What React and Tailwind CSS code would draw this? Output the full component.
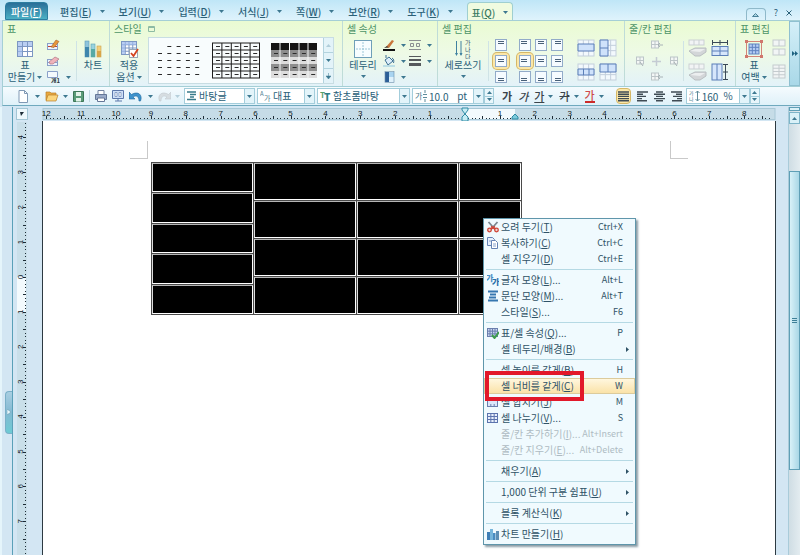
/**
 * App.jsx — Word processor window with the table tab and the cell context menu open.
 */

import { useState } from "react";

const MENUS = [
  ["편집", "E"],
  ["보기", "U"],
  ["입력", "D"],
  ["서식", "J"],
  ["쪽", "W"],
  ["보안", "R"],
  ["도구", "K"],
];

const CONTEXT_MENU = [
  [
    { label: "오려 두기", mnemonic: "T", hint: "Ctrl+X", icon: "cut" },
    { label: "복사하기", mnemonic: "C", hint: "Ctrl+C", icon: "copy" },
    { label: "셀 지우기", mnemonic: "D", hint: "Ctrl+E" },
  ],
  [
    { label: "글자 모양", mnemonic: "L", tail: "...", hint: "Alt+L", icon: "char" },
    { label: "문단 모양", mnemonic: "M", tail: "...", hint: "Alt+T", icon: "para" },
    { label: "스타일", mnemonic: "S", tail: "...", hint: "F6" },
  ],
  [
    { label: "표/셀 속성", mnemonic: "Q", tail: "...", hint: "P", icon: "props" },
    { label: "셀 테두리/배경", mnemonic: "B", sub: true },
  ],
  [
    { label: "셀 높이를 같게", mnemonic: "B", hint: "H" },
    { label: "셀 너비를 같게", mnemonic: "C", hint: "W", active: true },
    { label: "셀 합치기", mnemonic: "J", hint: "M", icon: "merge" },
    { label: "셀 나누기", mnemonic: "V", tail: "...", hint: "S", icon: "split" },
    { label: "줄/칸 추가하기", mnemonic: "I", tail: "...", hint: "Alt+Insert", disabled: true },
    { label: "줄/칸 지우기", mnemonic: "E", tail: "...", hint: "Alt+Delete", disabled: true },
  ],
  [{ label: "채우기", mnemonic: "A", sub: true }],
  [{ label: "1,000 단위 구분 쉼표", mnemonic: "U", sub: true }],
  [{ label: "블록 계산식", mnemonic: "K", sub: true }],
  [{ label: "차트 만들기", mnemonic: "H", icon: "chart" }],
];

function Svg({ w, h, children, className = "" }) {
  return (
    <svg width={w} height={h} viewBox={`0 0 ${w} ${h}`} fill="none" className={`shrink-0 ${className}`} aria-hidden="true">
      {children}
    </svg>
  );
}

function Caret({ className = "" }) {
  return (
    <Svg w={5} h={3} className={className}>
      <path d="M0 0h5L2.5 3z" fill="#3d7890" />
    </Svg>
  );
}

function Mnemonic({ label, k, tail }) {
  return <>{label}(<u className="underline-offset-1">{k}</u>){tail}</>;
}

/* Table glyph, used by many ribbon and menu icons */
function Grid({ x = 0, y = 0, w, h, cols, rows, fill = "#fff", stroke = "#7d97c2" }) {
  const lines = [];
  for (let i = 1; i < cols; i++) lines.push(`M${x + (w * i) / cols} ${y}v${h}`);
  for (let i = 1; i < rows; i++) lines.push(`M${x} ${y + (h * i) / rows}h${w}`);
  return (
    <g stroke={stroke}>
      <rect x={x} y={y} width={w} height={h} fill={fill} />
      <path d={lines.join("")} />
    </g>
  );
}

function TableIcon() {
  return (
    <Svg w={18} h={18}>
      <Grid x={1.5} y={1.5} w={15} h={15} cols={3} rows={3} />
      <path d="M2 2h14v4H2zM2 6h4v10H2z" fill="#9db9ec" fillOpacity=".7" />
      <path d="M1.5 6.5h15M6.5 1.5v15M11.5 1.5v5" stroke="#7d97c2" />
    </Svg>
  );
}

function ChartIcon() {
  return (
    <Svg w={18} h={18}>
      <rect x="1" y="1" width="4" height="16" fill="#8fc4dc" stroke="#5f9cb9" strokeWidth=".6" />
      <path d="M1 7h4v10H1z" fill="#3f86ad" />
      <rect x="7" y="4" width="4" height="13" fill="#9ad3de" stroke="#5aa3b4" strokeWidth=".6" />
      <path d="M7 9h4v8H7z" fill="#56a9a4" />
      <rect x="13" y="6" width="4" height="11" fill="#f3d07c" stroke="#c9a24f" strokeWidth=".6" />
      <path d="M13 11h4v6h-4z" fill="#d9a548" />
    </Svg>
  );
}

function ApplyIcon() {
  return (
    <Svg w={19} h={19}>
      <Grid x={1.5} y={1.5} w={15} h={13} cols={4} rows={4} />
      <path d="M2 2h14v3H2zM2 5h3v9H2z" fill="#9db9ec" fillOpacity=".7" />
      <rect x="9.500" y="9.500" width="8" height="8" fill="#fff" stroke="#9aa7b5" />
      <path d="M11 13l2.500 3L18 9" stroke="#d4431f" strokeWidth="1.800" />
    </Svg>
  );
}

function BorderIcon() {
  return (
    <Svg w={18} h={18}>
      <rect x=".5" y=".5" width="17" height="17" fill="#f7fdff" stroke="#6f9fb8" />
      <path d="M9 2v14M2 9h14" stroke="#9cc7d8" strokeDasharray="2 1" />
    </Svg>
  );
}

function VerticalTextIcon() {
  return (
    <Svg w={17} h={20}>
      <path d="M1.500 2v14M6 2v14" stroke="#3f81a0" />
      <path d="M0 14l1.500 3L3 14zM4.500 14L6 17l1.500-3z" fill="#3f81a0" />
      <g fontSize="6" fill="#31536a">
        <text x="10" y="6">가</text>
        <text x="10" y="13">나</text>
        <text x="10" y="20">다</text>
      </g>
    </Svg>
  );
}

function MarginIcon() {
  return (
    <Svg w={18} h={18}>
      <Grid x={4} y={4} w={10} h={10} cols={3} rows={3} fill="#b5cdf3" stroke="#5f83c0" />
      <path d="M1.500 0v18M16.500 0v18M0 1.500h18M0 16.500h18" stroke="#d0776c" strokeWidth=".9" />
      <path d="M0 0h3v3H0zM15 0h3v3h-3zM0 15h3v3H0zM15 15h3v3h-3z" fill="#d0776c" />
    </Svg>
  );
}

/* row and col say against which edges of the cell the text bars sit */
function AlignCellIcon({ row, col }) {
  const y = [2.5, 4.5, 7.5][row];
  const x = [2, 3, 4][col];
  return (
    <Svg w={12} h={12}>
      <rect x=".5" y=".5" width="11" height="11" fill="#f6fbff" stroke="#92abc9" />
      <path d={`M${x} ${y}h6M${x} ${y + 2}h6`} stroke="#496179" />
    </Svg>
  );
}

function SplitCellIcon({ kind }) {
  const fills = {
    mergeRow: "M1 5h16v7H1z",
    mergeCol: "M1 1h8v16H1z",
    splitRow: "M1 6h16v6H1z",
    splitTop: "M1 1h16v8H1z",
  };
  const lines = {
    mergeRow: "M1 5h16v7H1z",
    mergeCol: "M1 1h8v16H1zM1 9h8",
    splitRow: "M1 6h16v6H1zM6.500 6v6M12 6v6",
    splitTop: "M1 1h16v8H1zM9 1v8",
  };
  return (
    <Svg w={18} h={18}>
      <Grid x={1} y={1} w={16} h={16} cols={3} rows={3} fill="#f3f9fd" stroke="#c3cfdc" />
      <path d={fills[kind]} fill="#cfe2fb" />
      <path d={lines[kind]} stroke="#5b7fb8" />
    </Svg>
  );
}

function EraseLineIcon() {
  return (
    <Svg w={19} h={18}>
      <Grid x={1} y={1} w={15} h={5} cols={3} rows={1} fill="#f2f4f5" stroke="#cbd1d4" />
      <path d="M1 12l6-3 11 0v4l-6 4H7z" fill="#d3d6d8" stroke="#b9bec1" />
      <path d="M2 12l5-2h10l-5 3z" fill="#eceeef" />
    </Svg>
  );
}

function EqualHeightIcon() {
  return (
    <Svg w={18} h={17}>
      <Grid x={1} y={6.5} w={16} h={9} cols={2} rows={2} fill="#d6e6fb" stroke="#5b7fb8" />
      <path d="M1 2.500h16M1.500 0v5M9 0v5M16.500 0v5" stroke="#3a4a57" />
    </Svg>
  );
}

function EqualWidthIcon() {
  return (
    <Svg w={18} h={18}>
      <Grid x={1} y={1} w={10} h={16} cols={2} rows={1} fill="#d6e6fb" stroke="#5b7fb8" />
      <path d="M14.500 1v16M12 1.500h5M12 9h5M12 16.500h5" stroke="#3a4a57" />
    </Svg>
  );
}

function InsertIcon({ flip }) {
  return (
    <Svg w={12} h={10}>
      <Grid x={flip ? 2.5 : 0.5} y={1} w={7} h={7} cols={2} rows={2} fill="#f4f7f6" stroke="#bcc5c8" />
      <path d={flip ? "M6 6l3 4" : "M8 5h4M9 3L7 5l2 2"} stroke="#a8b2b6" />
    </Svg>
  );
}

function PencilIcon() {
  return (
    <Svg w={13} h={12}>
      <Grid x={0.5} y={4.5} w={10} h={6} cols={1} rows={2} fill="#eef4fd" stroke="#8aa0c9" />
      <path d="M1 7.500h9" stroke="#c4412f" />
      <path d="M4 8l5-7 3 1.500-5 6z" fill="#e8973b" stroke="#a3602a" strokeWidth=".6" />
    </Svg>
  );
}

function EraserIcon() {
  return (
    <Svg w={13} h={12}>
      <Grid x={0.5} y={4.5} w={10} h={6} cols={1} rows={2} fill="#eef4fd" stroke="#8aa0c9" />
      <path d="M2 7l6-5 4 2-6 5H3z" fill="#efb3bb" stroke="#b27583" strokeWidth=".7" />
    </Svg>
  );
}

function CaptionIcon() {
  return (
    <Svg w={13} h={12}>
      <path d="M.5.5h10v6H.5z" fill="#f4fafd" stroke="#8aa0c9" />
      <text x="4" y="12" fontSize="6" fontWeight="700" fill="#2c3840">개1</text>
    </Svg>
  );
}

function LineColorIcon() {
  return (
    <Svg w={12} h={12}>
      <path d="M0 10h12v2H0z" fill="#111" />
      <path d="M3 8l6-7 2 1-5 7z" fill="#c9763b" />
      <path d="M1 9l3-2 1.500 1.500z" fill="#3a3330" />
    </Svg>
  );
}

function FillColorIcon() {
  return (
    <Svg w={12} h={12}>
      <path d="M2 5l4-3 4 4-5 4z" fill="#dceefa" stroke="#3c6f93" />
      <path d="M3 3V0M9 3c2 1 2 3 1.500 5" stroke="#3c6f93" />
      <path d="M0 10.500h12v1H0z" fill="#8ec6de" />
    </Svg>
  );
}

function GradientIcon() {
  return (
    <Svg w={12} h={12}>
      <rect x="2" y="1" width="9" height="10" fill="#a9d4f0" />
      <rect x="2" y="1" width="4" height="10" fill="#2d5f97" />
      <path d="M6 6h5v5H6z" fill="#dff1fb" />
      <rect x="2" y=".5" width="9" height="11" stroke="#6a8cab" strokeWidth=".6" />
    </Svg>
  );
}

function LineStyleIcon() {
  return (
    <Svg w={12} h={10}>
      <path d="M0 .5h12M0 9.500h12" stroke="#8b8f92" />
      <path d="M1.500 3.500h3v3h-3zM7.500 3.500h3v3h-3z" stroke="#8b8f92" />
    </Svg>
  );
}

function LineWeightIcon() {
  return (
    <Svg w={12} h={10}>
      <path d="M0 .5h12" stroke="#55595c" />
      <path d="M0 4h12" stroke="#55595c" strokeWidth="2" />
      <path d="M0 8.500h12" stroke="#55595c" strokeWidth="3" />
    </Svg>
  );
}

/* Style thumbnails in the gallery */
function StyleThumb({ kind }) {
  const rows = [0, 1, 2, 3, 4];
  const bands = ["#141414", "#8d8d8d", "#dcdcdc", "#8d8d8d", "#dcdcdc"];
  return (
    <Svg w={48} h={38}>
      {kind === "dark" && rows.map((r) => <path key={r} d={`M1 ${1 + r * 7}h46v7H1z`} fill={bands[r]} />)}
      {kind === "dark" && <path d="M10 0v37M19.500 0v37M29 0v37M38 0v37" stroke="#f4f6f6" />}
      {rows.map((r) =>
        rows.map((c) =>
          (kind === "plain" && r === 0 && c === 0) || (kind === "dark" && r === 0) ? null : (
            <path key={`${r}-${c}`} d={`M${4 + c * 9.3} ${4.5 + r * 7}h4`} stroke="#2b2b2b" />
          )
        )
      )}
      {kind === "grid" && <Grid x={0.5} y={1} w={47} h={35} cols={5} rows={5} fill="none" stroke="#1d1d1d" />}
    </Svg>
  );
}

function MenuIcon({ name }) {
  if (name === "cut")
    return (
      <Svg w={12} h={12}>
        <path d="M1.500 1l8 9M10.500 1l-8 9" stroke="#7c8790" strokeWidth="1.800" />
        <circle cx="2.500" cy="9" r="1.800" fill="#f4d3cf" stroke="#cf4536" strokeWidth="1.300" />
        <circle cx="9.500" cy="9" r="1.800" fill="#f4d3cf" stroke="#cf4536" strokeWidth="1.300" />
        <path d="M4 5.500l4 2.500M8 5.500L4 8" stroke="#cf4536" strokeWidth="1.500" />
      </Svg>
    );
  if (name === "copy")
    return (
      <Svg w={12} h={12}>
        <path d="M.5.5h5l2 2v6h-7z" fill="#e6f0fc" stroke="#6482b4" />
        <path d="M4.500 3.500h4l2 2v6h-6z" fill="#fff" stroke="#6482b4" />
        <path d="M6 7h3M6 9h3M2 4h2" stroke="#88a2cc" />
      </Svg>
    );
  if (name === "char")
    return (
      <Svg w={12} h={12}>
        <text x="-1" y="7" fontSize="8" fontWeight="900" fill="#4a8fc4">가</text>
        <text x="5" y="11" fontSize="8" fontWeight="900" fill="#2b6ea8">가</text>
      </Svg>
    );
  if (name === "para")
    return (
      <Svg w={12} h={12}>
        <path d="M1 1.500h10M3 4.500h6M2 7.500h7M1 10.500h10" stroke="#3677b0" strokeWidth="1.800" />
      </Svg>
    );
  if (name === "props")
    return (
      <Svg w={12} h={12}>
        <Grid x={0.5} y={1.5} w={10} h={8} cols={4} rows={3} fill="#c9d6f0" stroke="#6b7fae" />
        <path d="M5 8l2.500 3L12 5" stroke="#3e9c4c" strokeWidth="2" />
      </Svg>
    );
  if (name === "merge")
    return (
      <Svg w={12} h={12}>
        <Grid x={0.5} y={1.5} w={10} h={9} cols={3} rows={3} fill="#dbe7fa" stroke="#6b7fae" />
        <path d="M1 5h9v3H1z" fill="#dbe7fa" />
      </Svg>
    );
  if (name === "split")
    return (
      <Svg w={12} h={12}>
        <Grid x={0.5} y={1.5} w={10} h={9} cols={3} rows={3} fill="#e9f0fc" stroke="#5c74ae" />
      </Svg>
    );
  if (name === "chart")
    return (
      <Svg w={12} h={12}>
        <path d="M0 4h3v8H0z" fill="#3d7db5" />
        <path d="M3 1h3v11H3z" fill="#76b6dc" />
        <path d="M6 5h2.500v7H6z" fill="#4a8cc0" />
        <path d="M9 3h3v9H9z" fill="#5d8fb5" />
      </Svg>
    );
  return <span className="w-3 shrink-0" />;
}

function Group({ title, extra, className = "", children }) {
  return (
    <section className={`flex shrink-0 flex-col border-r border-[#bfdcd8] ${className}`}>
      <h2 className="flex h-4 items-center gap-1.5 px-1 text-[10px] leading-4 text-[#4d9468]">
        {title}
        {extra}
      </h2>
      <div className="flex flex-1 items-start">{children}</div>
    </section>
  );
}

function BigButton({ icon, lines, caret, className = "" }) {
  return (
    <button type="button" className={`flex shrink-0 flex-col items-center pt-0.5 ${className}`}>
      <span className="flex h-5 items-center">{icon}</span>
      {lines.map((l, i) => (
        <span key={l} className="flex items-center gap-0.5 text-[10px] leading-3 whitespace-nowrap">
          {l}
          {caret === "inline" && i === lines.length - 1 && <Caret />}
        </span>
      ))}
      {caret === "below" && <Caret className="mt-1" />}
    </button>
  );
}

function SmallButton({ icon, label, caret }) {
  return (
    <button type="button" aria-label={label} className="flex h-4 items-center gap-1.5">
      {icon}
      {caret && <Caret />}
    </button>
  );
}

function Divider() {
  return <span className="mt-1 h-10 w-px shrink-0 bg-[#cfe3e6]" />;
}

function Ribbon() {
  return (
    <div className="ml-0.5 flex h-[66px] shrink-0 overflow-hidden border-t border-l border-[#a5cfd6] bg-linear-to-b from-[#eafbd2] via-[#eefae6] to-[#e3f2f9]">
      <Group title="표" className="w-[107px]">
        <BigButton icon={<TableIcon />} lines={["표", "만들기"]} caret="inline" className="w-11" />
        <div className="flex w-[30px] flex-col">
          <SmallButton icon={<PencilIcon />} label="표 그리기" />
          <SmallButton icon={<EraserIcon />} label="표 지우개" />
          <SmallButton icon={<CaptionIcon />} label="캡션" caret />
        </div>
        <Divider />
        <BigButton icon={<ChartIcon />} lines={["차트"]} className="w-8" />
      </Group>

      <Group
        title="스타일"
        className="w-[233px]"
        extra={
          <Svg w={7} h={6}>
            <path d="M.5.5h6v5h-6zM.5 1.500h6" stroke="#8dbba4" />
          </Svg>
        }
      >
        <BigButton icon={<ApplyIcon />} lines={["적용", "옵션"]} caret="inline" className="w-[38px]" />
        <div className="mr-2 flex h-[47px] flex-1 border border-[#c8dde3] bg-[#f8fcfd]">
          <div className="flex flex-1 items-center justify-around">
            <button type="button" aria-label="일반"><StyleThumb kind="plain" /></button>
            <button type="button" aria-label="격자"><StyleThumb kind="grid" /></button>
            <button type="button" aria-label="진한 줄무늬"><StyleThumb kind="dark" /></button>
          </div>
          <div className="flex w-2.5 flex-col divide-y divide-[#b3d3de] border-l border-[#b3d3de] bg-[#e3f3f9]">
            <button type="button" aria-label="위로" className="flex flex-1 items-center justify-center"><Caret className="rotate-180 opacity-30" /></button>
            <button type="button" aria-label="아래로" className="flex flex-1 items-center justify-center"><Caret /></button>
            <button type="button" aria-label="자세히" className="flex flex-1 items-center justify-center">
              <Svg w={5} h={6}><path d="M2.500 0v3M0 3h5L2.500 6z" fill="#3d7890" stroke="#3d7890" strokeWidth=".5" /></Svg>
            </button>
          </div>
        </div>
      </Group>

      <Group title="셀 속성" className="w-[95px]">
        <BigButton icon={<BorderIcon />} lines={["테두리"]} caret="below" className="w-10" />
        <div className="flex w-[26px] flex-col">
          <SmallButton icon={<LineColorIcon />} label="선 색" caret />
          <SmallButton icon={<FillColorIcon />} label="채우기 색" caret />
          <SmallButton icon={<GradientIcon />} label="그러데이션" caret />
        </div>
        <div className="flex flex-col">
          <SmallButton icon={<LineStyleIcon />} label="선 종류" caret />
          <SmallButton icon={<LineWeightIcon />} label="선 굵기" caret />
        </div>
      </Group>

      <Group title="셀 편집" className="w-[187px]">
        <BigButton icon={<VerticalTextIcon />} lines={["세로쓰기"]} caret="below" className="w-[50px]" />
        <Divider />
        <div className="flex flex-col pl-1">
          {[0, 1, 2].map((r) => (
            <button
              key={r}
              type="button"
              aria-label={`세로 정렬 ${r + 1}`}
              className={`flex size-4 items-center justify-center rounded-sm ${r === 1 ? "bg-[#fbe7a8] ring-1 ring-[#d5b767]" : ""}`}
            >
              <AlignCellIcon row={r} col={1} />
            </button>
          ))}
        </div>
        <span className="px-1"><Divider /></span>
        <div className="grid grid-cols-3">
          {[0, 1, 2].map((r) =>
            [0, 1, 2].map((c) => (
              <button
                key={`${r}-${c}`}
                type="button"
                aria-label={`셀 정렬 ${r + 1}-${c + 1}`}
                className={`flex size-4 items-center justify-center rounded-sm ${r === 1 && c === 0 ? "bg-[#fbe7a8] ring-1 ring-[#d5b767]" : ""}`}
              >
                <AlignCellIcon row={r} col={c} />
              </button>
            ))
          )}
        </div>
        <span className="px-1"><Divider /></span>
        <div className="grid grid-cols-2 gap-x-1 gap-y-1.5 pt-0.5 pl-1">
          <button type="button" aria-label="셀 합치기"><SplitCellIcon kind="mergeRow" /></button>
          <button type="button" aria-label="셀 나누기"><SplitCellIcon kind="mergeCol" /></button>
          <button type="button" aria-label="줄 나누기"><SplitCellIcon kind="splitRow" /></button>
          <button type="button" aria-label="칸 나누기"><SplitCellIcon kind="splitTop" /></button>
        </div>
      </Group>

      <Group title="줄/칸 편집" className="w-[111px]">
        <div className="grid w-[58px] grid-cols-3 place-items-center pl-1.5">
          <span className="h-4" />
          <SmallButton icon={<InsertIcon />} label="위에 줄 추가" />
          <span />
          <SmallButton icon={<InsertIcon flip />} label="왼쪽에 칸 추가" />
          <Svg w={9} h={9}><path d="M4.500 0v9M0 4.500h9" stroke="#c4cbd3" strokeWidth="1.500" /></Svg>
          <SmallButton icon={<InsertIcon flip />} label="오른쪽에 칸 추가" />
          <span className="h-4" />
          <SmallButton icon={<InsertIcon />} label="아래에 줄 추가" />
          <span />
        </div>
        <Divider />
        <div className="grid grid-cols-2 gap-x-1 gap-y-1.5 pt-0.5 pl-1">
          <button type="button" aria-label="줄 지우기"><EraseLineIcon /></button>
          <button type="button" aria-label="셀 높이를 같게"><EqualHeightIcon /></button>
          <button type="button" aria-label="칸 지우기"><EraseLineIcon /></button>
          <button type="button" aria-label="셀 너비를 같게"><EqualWidthIcon /></button>
        </div>
      </Group>

      <section className="flex min-w-0 flex-1 flex-col overflow-hidden">
        <h2 className="h-4 px-1 text-[10px] leading-4 text-[#4d9468]">표 편집</h2>
        <div className="flex">
          <BigButton icon={<MarginIcon />} lines={["표", "여백"]} caret="inline" className="w-9" />
          <div className="flex flex-col gap-1.5 pt-0.5">
            <Svg w={16} h={18}>
              <Grid x={1} y={1} w={12} h={6} cols={2} rows={1} fill="#f2f5f5" stroke="#c4cbce" />
              <Grid x={1} y={10} w={12} h={6} cols={2} rows={1} fill="#f2f5f5" stroke="#c4cbce" />
            </Svg>
            <Svg w={16} h={18}>
              <Grid x={1} y={2} w={12} h={13} cols={2} rows={4} fill="#f2f5f5" stroke="#c4cbce" />
            </Svg>
          </div>
        </div>
      </section>

      <button type="button" aria-label="더 보기" className="flex w-[11px] shrink-0 items-center justify-center border border-[#8fc0d0] bg-linear-to-b from-[#d4eff8] to-[#a9d8e8]">
        <Svg w={6} h={5}>
          <path d="M0 0l3 2.500L0 5zM3 0l3 2.500L3 5z" fill="#1f6280" />
        </Svg>
      </button>
    </div>
  );
}

function Combo({ label, icon, options, className = "" }) {
  return (
    <label className={`relative flex h-4 shrink-0 items-center border border-[#a3cddb] bg-white pl-0.5 ${className}`}>
      {icon}
      <select aria-label={label} className="h-full min-w-0 flex-1 appearance-none bg-transparent pl-0.5 text-[10px] leading-[14px] outline-none">
        {options.map((o) => <option key={o}>{o}</option>)}
      </select>
      <span className="pointer-events-none flex h-full w-2.5 items-center justify-center border-l border-[#a3cddb] bg-[#e3f4fa]">
        <Caret />
      </span>
    </label>
  );
}

function Spinner() {
  return (
    <span className="flex h-4 w-2.5 shrink-0 flex-col divide-y divide-[#a3cddb] border border-[#a3cddb] bg-[#e8f6fb]">
      <button type="button" aria-label="늘리기" className="flex flex-1 items-center justify-center"><Caret className="rotate-180" /></button>
      <button type="button" aria-label="줄이기" className="flex flex-1 items-center justify-center"><Caret /></button>
    </span>
  );
}

function NumberBox({ label, icon, value, unit, onChange, className = "" }) {
  return (
    <div className={`flex h-4 shrink-0 items-center border border-[#a3cddb] bg-white pl-0.5 ${className}`}>
      {icon}
      <input aria-label={label} value={value} onChange={onChange} className="h-full min-w-0 flex-1 bg-transparent pl-0.5 text-[10px] leading-[14px] outline-none" />
      <span className="pr-1.5 text-[10px] leading-[14px]">{unit}</span>
      <button type="button" aria-label={`${label} 목록`} className="flex h-full w-2.5 items-center justify-center border-l border-[#a3cddb] bg-[#e3f4fa]">
        <Caret />
      </button>
    </div>
  );
}

function AlignIcon({ d }) {
  return (
    <Svg w={11} h={11}>
      <path d={d} stroke="#3f4b54" strokeWidth="1.400" />
    </Svg>
  );
}

function Toolbar() {
  const [size, setSize] = useState("10.0");
  const [spacing, setSpacing] = useState("160");

  return (
    <div className="ml-0.5 flex h-5 shrink-0 items-center overflow-hidden border-y border-l border-[#a5cfd6] border-b-[#6fa9be] bg-linear-to-b from-[#f5fbfe] to-[#dff1f9] pl-3.5">
      <div className="flex w-[167px] shrink-0 items-center gap-[5px]">
        <button type="button" aria-label="새 문서" className="flex items-center gap-1.5">
          <Svg w={12} h={13}>
            <path d="M2 .5h5.500l3 3v9H2z" fill="#fff" stroke="#8099b5" />
            <path d="M7.500.5v3h3" stroke="#8099b5" />
          </Svg>
          <Caret />
        </button>
        <button type="button" aria-label="불러오기" className="flex items-center gap-1">
          <Svg w={14} h={12}>
            <path d="M1 2h4l1 1h5v7H1z" fill="#e9a83f" stroke="#b9802c" strokeWidth=".7" />
            <path d="M3 5h10l-2 6H1z" fill="#fbd57d" stroke="#b9802c" strokeWidth=".7" />
          </Svg>
          <Caret />
        </button>
        <button type="button" aria-label="저장하기">
          <Svg w={11} h={11}>
            <path d="M.5.5h10v10H.5z" fill="#5a9b78" stroke="#3d7658" />
            <path d="M3 1h5v4H3zM3 7h5v3.500H3z" fill="#e4f3ea" />
          </Svg>
        </button>
        <span className="h-3 w-px bg-[#c3dbe4]" />
        <button type="button" aria-label="인쇄">
          <Svg w={12} h={12}>
            <path d="M3 .5h6v4H3z" fill="#fff" stroke="#7585a3" />
            <path d="M.5 4.500h11v5H.5z" fill="#9aabc9" stroke="#647798" />
            <path d="M2.500 8h7v3.500h-7z" fill="#fff" stroke="#647798" />
          </Svg>
        </button>
        <button type="button" aria-label="미리 보기">
          <Svg w={12} h={12}>
            <path d="M.5.5h11v8H.5z" fill="#cfe0f7" stroke="#5d78ab" />
            <path d="M3 2.500h2v4H3zM7 2.500h2v4H7z" fill="#fff" stroke="#5d78ab" strokeWidth=".6" />
            <path d="M3 11h7M6 9v2" stroke="#5d78ab" />
          </Svg>
        </button>
        <button type="button" aria-label="되돌리기" className="flex items-center gap-1.5">
          <Svg w={13} h={11}>
            <path d="M0 1v7h6L4 6c3-2 6-1 6 4h1.500C14 4 9-.5 2.500 3.500z" fill="#3d93cd" stroke="#22699d" strokeWidth=".6" />
          </Svg>
          <Caret />
        </button>
        <button type="button" aria-label="다시 실행" className="flex items-center gap-1">
          <Svg w={13} h={11} className="-scale-x-100">
            <path d="M0 1v7h6L4 6c3-2 6-1 6 4h1.500C14 4 9-.5 2.500 3.500z" fill="#d6dde1" stroke="#c2cbd0" strokeWidth=".6" />
          </Svg>
          <Caret className="opacity-30" />
        </button>
      </div>

      <div className="flex shrink-0 items-center gap-0.5">
        <Combo
          label="스타일"
          className="w-[71px]"
          options={["바탕글"]}
          icon={<Svg w={10} h={10}><path d="M0 1h9M3 3.500h6M3 6h4M0 8.500h9" stroke="#397a89" strokeWidth="1.300" /></Svg>}
        />
        <Combo
          label="언어"
          className="w-[58px]"
          options={["대표"]}
          icon={
            <Svg w={11} h={11}>
              <text x="0" y="5" fontSize="6" fill="#4d7c8d">A</text>
              <text x="4" y="10" fontSize="7" fill="#4d7c8d">가</text>
            </Svg>
          }
        />
        <Combo
          label="글꼴"
          className="w-[93px]"
          options={["함초롬바탕"]}
          icon={
            <Svg w={11} h={11}>
              <text x="0" y="7" fontSize="8" fontWeight="700" fill="#56a06b">T</text>
              <text x="4" y="10" fontSize="10" fontWeight="900" fill="#2c7e86">T</text>
            </Svg>
          }
        />
        <NumberBox
          label="글자 크기"
          className="w-[72px]"
          value={size}
          unit="pt"
          onChange={(e) => setSize(e.target.value)}
          icon={
            <Svg w={12} h={12}>
              <text x="0" y="9" fontSize="8" fill="#4d7c8d">가</text>
              <path d="M8 4.500h4M8 7.500h4M10 0v3M10 9v3" stroke="#5d8b9b" />
            </Svg>
          }
        />
      </div>
      <Spinner />

      <div className="flex shrink-0 items-center gap-1.5 px-2 text-[11px] leading-4 text-[#3a444b]">
        <button type="button" className="font-bold">가</button>
        <button type="button" className="font-medium italic">가</button>
        <button type="button" className="flex items-center gap-1"><span className="font-medium underline">가</span><Caret /></button>
        <button type="button" className="flex items-center gap-1"><span className="font-medium line-through">가</span><Caret /></button>
        <button type="button" className="flex items-center gap-1">
          <span className="h-3.5 border-b-2 border-[#cc2b2b] leading-3 font-medium text-[#cf4a4a]">가</span>
          <Caret />
        </button>
      </div>

      <div className="flex shrink-0 items-center gap-1.5 pl-1">
        <button type="button" aria-label="양쪽 정렬" className="flex h-4 w-[15px] items-center justify-center rounded-sm border border-[#d5b767] bg-[#fbe7a8]">
          <AlignIcon d="M0 1h11M0 3.200h11M0 5.400h11M0 7.600h11M0 9.800h11" />
        </button>
        <button type="button" aria-label="왼쪽 정렬"><AlignIcon d="M0 1h11M0 3.200h6M0 5.400h9M0 7.600h5M0 9.800h10" /></button>
        <button type="button" aria-label="가운데 정렬"><AlignIcon d="M2 1h7M0 3.200h11M2 5.400h7M0 7.600h11M2 9.800h7" /></button>
        <button type="button" aria-label="오른쪽 정렬"><AlignIcon d="M0 1h11M5 3.200h6M2 5.400h9M6 7.600h5M1 9.800h10" /></button>
      </div>
      <div className="flex shrink-0 pl-1">
        <NumberBox
          label="줄 간격"
          className="w-16"
          value={spacing}
          unit="%"
          onChange={(e) => setSpacing(e.target.value)}
          icon={
            <Svg w={11} h={12}>
              <g fontSize="5" fill="#4d7c8d">
                <text x="0" y="5">가</text>
                <text x="0" y="11">나</text>
              </g>
              <path d="M8.500 1v10M6.500 3l2-2 2 2M6.500 9l2 2 2-2" stroke="#5d8b9b" />
            </Svg>
          }
        />
        <Spinner />
      </div>
    </div>
  );
}

/* Centimetre rulers: a tick every millimetre, a number every 34.9px */
const CM = 34.9;

function range(from, to) {
  return Array.from({ length: to - from + 1 }, (_, i) => from + i);
}

function HorizontalRuler() {
  const zero = 423;
  return (
    <svg height="14" className="block w-full shrink-0 font-['Liberation_Sans',sans-serif]" aria-hidden="true">
      <rect x="1" y="1.500" width="732" height="11" fill="#c6dce7" stroke="#a9c8d6" />
      <rect x={zero} y="2" width="50" height="10" fill="#f3fafd" />
      {range(-120, 87).map((i) => (
        <rect key={i} x={Math.round(zero + (i * CM) / 10)} y={i % 5 === 0 ? 9 : 11} width="1" height={i % 5 === 0 ? 3 : 1} fill="#1d2c36" />
      ))}
      {range(-12, 8).filter((n) => n !== 0).map((n) => (
        <text key={n} x={zero + n * CM} y="9" textAnchor="middle" fontSize="8" fill="#10181d">{Math.abs(n)}</text>
      ))}
      <path d={`M${zero - 3} 1h6v2l-3 4-3-4zM${zero} 7l3 3v4h-6v-4z`} fill="#c6ecf4" stroke="#2f8ba5" />
      <path d={`M${zero + 47} 12h6v-2l-3-3-3 3z`} fill="#7ccbdc" stroke="#2f8ba5" />
    </svg>
  );
}

function VerticalRuler() {
  const zero = 155;
  return (
    <svg width="12" className="ml-0.5 block min-h-0 flex-1 font-['Liberation_Sans',sans-serif]" aria-hidden="true">
      <rect x="2" width="10" height="100%" fill="#c9dfe9" />
      <rect x="2" y={zero} width="9" height="35" fill="#f3fafd" />
      {range(-44, 119).map((i) => (
        <rect key={i} x={i % 5 === 0 ? 8 : 10} y={Math.round(zero + (i * CM) / 10)} width={i % 5 === 0 ? 3 : 1} height="1" fill="#1d2c36" />
      ))}
      {range(-4, 7).map((n) => (
        <text key={n} transform={`translate(8 ${zero + n * CM}) rotate(-90)`} textAnchor="middle" fontSize="8" fill="#10181d">
          {Math.abs(n)}
        </text>
      ))}
    </svg>
  );
}

const CELL = "border border-t-[#b5b5b5] border-r-white border-b-white border-l-[#dcdcdc] bg-black p-0";

/* First column has five rows, the others have four */
const TABLE_ROWS = [
  { h: "h-[29px]", first: 1, rest: 2 },
  { h: "h-[7px]", first: 2 },
  { h: "h-[22px]", rest: 2 },
  { h: "h-[14px]", first: 2 },
  { h: "h-[14px]", rest: 2 },
  { h: "h-[22px]", first: 2 },
  { h: "h-[7px]", rest: 2 },
  { h: "h-[29px]", first: 1 },
];

function DocumentTable() {
  return (
    <table className="ml-[108px] w-[371px] table-fixed border-separate border-spacing-px bg-[#4a4a4a]">
      <colgroup>
        <col className="w-[101px]" />
        <col className="w-[102px]" />
        <col className="w-[101px]" />
        <col />
      </colgroup>
      <tbody>
        {TABLE_ROWS.map((r, i) => (
          <tr key={i} className={r.h}>
            {r.first && <td rowSpan={r.first} className={CELL} />}
            {r.rest && [0, 1, 2].map((c) => <td key={c} rowSpan={r.rest} className={CELL} />)}
          </tr>
        ))}
      </tbody>
    </table>
  );
}

function ContextMenu() {
  return (
    <div role="menu" className="absolute top-[218px] left-[483px] w-[153px] border border-[#5f96ab] bg-[#f0fafe] pb-0.5 shadow-[2px_2px_2px_rgba(60,90,105,0.6)]">
      {CONTEXT_MENU.map((group, g) => (
        <div key={g}>
          {g > 0 && <div className="mx-0.5 my-0.5 h-px bg-[#b5d9e4]" />}
          {group.map((item) => (
            <button
              key={item.label}
              type="button"
              role="menuitem"
              disabled={item.disabled}
              className={`relative flex h-4 w-full items-center pr-3 pl-[3px] text-left text-[10px] leading-4 whitespace-nowrap ${
                item.disabled ? "text-[#aebbc2]" : "text-[#2f5266]"
              } ${item.active ? "bg-linear-to-b from-[#fff8e2] to-[#fae1a4] ring-1 ring-[#dccb9c] ring-inset" : ""}`}
            >
              <MenuIcon name={item.icon} />
              <span className="flex-1 pl-0.5"><Mnemonic label={item.label} k={item.mnemonic} tail={item.tail} /></span>
              {item.hint && <span className="text-[9px]">{item.hint}</span>}
              {item.sub && (
                <Svg w={3} h={5} className="-mr-1.5">
                  <path d="M0 0l3 2.500L0 5z" fill="#2f5266" />
                </Svg>
              )}
              {item.active && <span className="absolute -inset-y-[7px] left-px z-10 w-[99px] border-4 border-[#e2182a]" />}
            </button>
          ))}
        </div>
      ))}
    </div>
  );
}

export default function App() {
  return (
    <div className="relative flex h-screen flex-col overflow-hidden bg-[#d3e6f3] font-['Noto_Sans_CJK_KR',sans-serif] text-[#2a6078]">
      {/* Menu bar */}
      <nav className="flex h-5 shrink-0 items-end bg-linear-to-b from-[#bfe6f7] to-[#dff3fc] pl-[5px] text-[10px]">
        <button type="button" className="h-[18px] w-[43px] shrink-0 rounded-t border border-[#2c7ea0] bg-linear-to-b from-[#2a6f98] to-[#4cb0c4] font-medium text-white">
          <Mnemonic label="파일" k="F" />
        </button>
        <div className="ml-3 flex h-[17px] shrink-0 items-center font-medium">
          {MENUS.map(([label, k]) => (
            <button key={k} type="button" className="flex items-center gap-2 pr-3.5 whitespace-nowrap">
              <span><Mnemonic label={label} k={k} /></span>
              <Caret />
            </button>
          ))}
        </div>
        <button type="button" className="-mb-px flex h-[19px] w-[46px] shrink-0 items-center justify-between rounded-t border border-b-0 border-[#9fcfd0] bg-[#f0fbe0] px-1 font-medium whitespace-nowrap text-[#3b7a62]">
          <span><Mnemonic label="표" k="Q" /></span>
          <Caret />
        </button>
        <div className="flex flex-1 items-end justify-end gap-2 pr-2">
          <button type="button" aria-label="리본 접기" className="flex h-3 w-5 items-center justify-center rounded-t border border-b-0 border-[#8fb9ca]">
            <Svg w={7} h={4}><path d="M.5 3.500l3-3 3 3z" fill="#a9d3e0" stroke="#4a8198" /></Svg>
          </button>
          <button type="button" className="h-3.5 text-[9px] leading-3">?</button>
          <button type="button" aria-label="닫기" className="pb-1">
            <Svg w={6} h={6}><path d="M.5.5l5 5M5.500.5l-5 5" stroke="#2a6078" /></Svg>
          </button>
        </div>
      </nav>

      <Ribbon />
      <Toolbar />

      {/* Document area */}
      <main className="flex min-h-0 flex-1 pt-px">
        <div className="flex w-[13px] shrink-0 flex-col items-end border-r border-[#5aa0b8] shadow-[inset_2px_0_0_#e5f5fb]">
          <span className="grow-7" />
          <button type="button" aria-label="작업 창 펴기" className="flex h-[43px] w-[7px] items-center justify-center rounded-l-sm border border-r-0 border-[#7ab0c8] bg-linear-to-b from-[#a9cfe2] via-[#83b9d2] to-[#6ccbd4]">
            <Svg w={4} h={6}><path d="M0 0l4 3-4 3z" fill="#e9f8fc" stroke="#5b92a8" strokeWidth=".5" /></Svg>
          </button>
          <span className="grow-3" />
        </div>

        <div className="flex w-[29px] shrink-0 flex-col">
          <button type="button" aria-label="탭 종류" className="mt-px mb-0.5 ml-[3px] flex h-3 w-3 items-center justify-center border border-[#a3c6d5] bg-[#eef8fc]">
            <Svg w={4} h={4}><path d="M0 0h4L1 4z" fill="#1d2c36" /></Svg>
          </button>
          <VerticalRuler />
        </div>

        <div className="flex min-w-0 flex-1 flex-col">
          <HorizontalRuler />
          <div className="min-h-0 flex-1 overflow-hidden border-x border-[#2d3a42] bg-white">
            <div className="flex justify-between px-[87px] pt-5 pb-[3px]">
              <span className="h-[18px] w-[18px] border-r border-b border-[#c9c9c9]" />
              <span className="h-[18px] w-[18px] border-b border-l border-[#c9c9c9]" />
            </div>
            <DocumentTable />
          </div>
        </div>

        <div className="ml-3 flex w-3 shrink-0 flex-col border-l border-[#a9cbd9] bg-linear-to-r from-[#cfdde4] to-[#e3ecf0]">
          <span className="h-1 shrink-0 border border-[#5f9fb6] bg-[#d9f1f8]" />
          <button type="button" aria-label="위로 스크롤" className="mt-px flex h-3 shrink-0 items-center justify-center border border-[#7db4c8] bg-[#d9f1f8]">
            <Caret className="rotate-180" />
          </button>
          <span className="grow-11" />
          <div className="flex grow-69 items-center justify-center border border-[#5f9fb6] bg-linear-to-r from-[#d8f1f8] to-[#a9d7e6]">
            <Svg w={5} h={5}><path d="M0 .5h5M0 2.500h5M0 4.500h5" stroke="#3d7f97" /></Svg>
          </div>
          <span className="grow-20" />
        </div>
      </main>

      <ContextMenu />
    </div>
  );
}
